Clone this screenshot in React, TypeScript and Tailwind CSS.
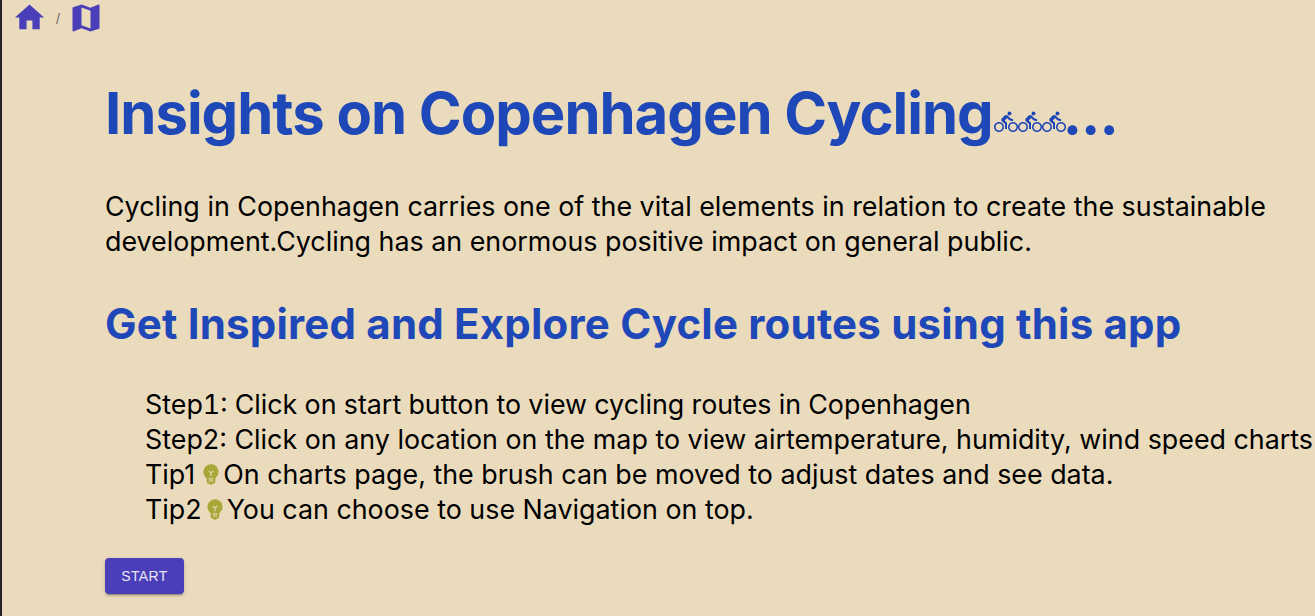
import { MdHome, MdMap, MdDirectionsBike, MdEmojiObjects } from 'react-icons/md';

export default function App() {
  return (
    <div className="min-h-[616px] overflow-hidden border-l-2 border-[#222] bg-[#ebdbbd] font-['Inter',sans-serif] text-black">
      <nav className="flex h-[36px] items-start pl-[10px] text-[#4a3fb8]">
        <MdHome size={35} />
        <span className="ml-[9px] mt-[9px] font-['Liberation_Sans',sans-serif] text-[14px] text-[#6b6a60]">/</span>
        <MdMap size={36} className="ml-[8px]" />
      </nav>

      <div className="pl-[103px]">
        <h1 className="mt-[38px] flex h-[78px] items-center text-[58px] font-bold leading-[78px] tracking-[-1px] text-[#1e47b8]">
          Insights on Copenhagen Cycling
          <span className="ml-[1px] mt-[18px] flex">
            <MdDirectionsBike size={24} />
            <MdDirectionsBike size={24} />
            <MdDirectionsBike size={24} />
          </span>
          <span className="-ml-[3px]">...</span>
        </h1>

        <p className="mt-[37px] w-[1190px] text-[26.85px] leading-[35px]">
          Cycling in Copenhagen carries one of the vital elements in relation to create the sustainable development.Cycling has an enormous positive impact on general public.
        </p>

        <h2 className="mt-[37px] h-[56px] text-[42px] font-bold leading-[56px] tracking-[0.2px] text-[#1e47b8]">
          Get Inspired and Explore Cycle routes using this app
        </h2>

        <ul className="mt-[35px] whitespace-nowrap pl-[40px] text-[26.85px] leading-[35px]">
          <li className="tabular-nums">Step1: Click on start button to view cycling routes in Copenhagen</li>
          <li>Step2: Click on any location on the map to view airtemperature, humidity, wind speed charts</li>
          <li className="flex items-center">
            Tip1
            <MdEmojiObjects size={26} className="ml-[3px] -mr-[1px] -mt-[2px] text-[#a8a838]" />
            On charts page, the brush can be moved to adjust dates and see data.
          </li>
          <li className="flex items-center">
            Tip2
            <MdEmojiObjects size={26} className="-mt-[2px] text-[#a8a838]" />
            <span className="-ml-[1px]">You can choose to use Navigation on top.</span>
          </li>
        </ul>

        <button className="mt-[31px] h-[36px] w-[79px] rounded-[4px] bg-[#4a3fb8] font-['Liberation_Sans',sans-serif] text-[14px] tracking-[0.4px] text-[#e8e6f6] shadow-[0_3px_1px_-2px_rgba(0,0,0,0.2),0_2px_2px_0_rgba(0,0,0,0.14),0_1px_5px_0_rgba(0,0,0,0.12)]">
          START
        </button>
      </div>
    </div>
  );
}
